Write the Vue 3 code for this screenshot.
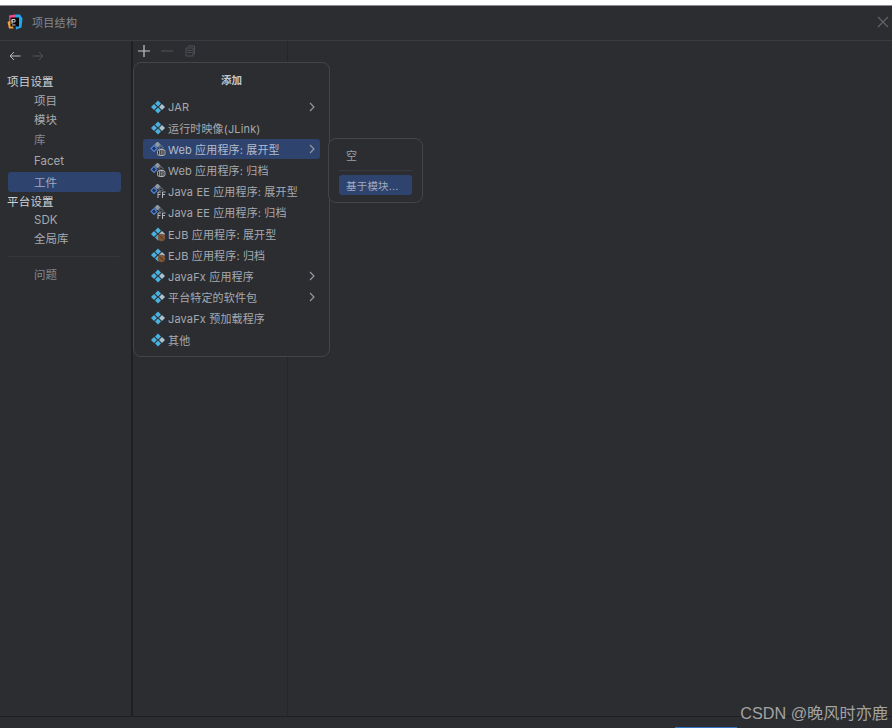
<script setup>
const side = [
  { t: '项目设置', c: 'head h18' },
  { t: '项目', c: 'sub h20' },
  { t: '模块', c: 'sub h18' },
  { t: '库', c: 'sub h22 dim' },
  { t: 'Facet', c: 'sub h22' },
  { t: '工件', c: 'sub h20 sel' },
  { t: '平台设置', c: 'head h18' },
  { t: 'SDK', c: 'sub h19' },
  { t: '全局库', c: 'sub h18' },
]
const items = [
  { t: 'JAR', k: 'mod', a: true },
  { t: '运行时映像(JLink)', k: 'mod' },
  { t: 'Web 应用程序: 展开型', k: 'web', a: true, s: true },
  { t: 'Web 应用程序: 归档', k: 'web' },
  { t: 'Java EE 应用程序: 展开型', k: 'ee' },
  { t: 'Java EE 应用程序: 归档', k: 'ee', w: true },
  { t: 'EJB 应用程序: 展开型', k: 'ejb' },
  { t: 'EJB 应用程序: 归档', k: 'ejb' },
  { t: 'JavaFx 应用程序', k: 'mod', a: true },
  { t: '平台特定的软件包', k: 'mod', a: true },
  { t: 'JavaFx 预加载程序', k: 'mod', w: true },
  { t: '其他', k: 'mod' },
]
</script>

<template>
  <div class="page">
    <div class="topline"></div>
    <header class="title">
      <svg class="logo" width="16" height="16" viewBox="0 0 16 16">
        <path d="M2 1.500l6-1 1 6-6.500 3z" fill="#ef4a8e" />
        <path d="M0.500 8l4-2 2 8.500-4.500 0z" fill="#f2a03a" />
        <path d="M8 .5h5l2.500 4-1 9-5.500 2z" fill="#22a6ee" />
        <rect x="3.500" y="3.500" width="8.500" height="9" fill="#0a0a0a" />
        <path d="M5 5.500h3v2.500h-3zM5 5.500v4.500M5 11h3.500" stroke="#ccc" stroke-width="1" fill="none" />
      </svg>
      <span class="title-text">项目结构</span>
      <svg class="close" width="12" height="12" viewBox="0 0 12 12">
        <path d="M1 1l10 10M11 1L1 11" stroke="#62656b" stroke-width="1.100" />
      </svg>
    </header>
    <main class="body">
      <aside class="side">
        <div class="nav">
          <svg width="12" height="10" viewBox="0 0 12 10">
            <path d="M11.500 5H1M5 1L1 5l4 4" stroke="#b8bbc0" stroke-width="1" fill="none" />
          </svg>
          <svg width="12" height="10" viewBox="0 0 12 10">
            <path d="M.5 5H11M7 1l4 4-4 4" stroke="#505257" stroke-width="1" fill="none" />
          </svg>
        </div>
        <div v-for="s in side" :key="s.t" class="row" :class="s.c">
          <span>{{ s.t }}</span>
        </div>
        <div class="sep"></div>
        <div class="row sub h18 dim"><span>问题</span></div>
      </aside>
      <section class="mid">
        <div class="tools">
          <svg width="12" height="12" viewBox="0 0 12 12">
            <path d="M6 0v12M0 6h12" stroke="#c3c5c9" stroke-width="1.200" />
          </svg>
          <svg width="12" height="12" viewBox="0 0 12 12">
            <path d="M0 6h12" stroke="#4c4e53" stroke-width="1.200" />
          </svg>
          <svg width="12" height="12" viewBox="0 0 12 12">
            <path d="M4 1h6.500v8.500M2 3h7v8H2zM3.500 5.500h4M3.500 7.500h4" stroke="#4f5156" stroke-width="1" fill="none" />
          </svg>
        </div>
      </section>
      <section class="rest"></section>

      <div class="menu">
        <div class="menu-title">添加</div>
        <div class="list">
          <div v-for="i in items" :key="i.t" class="item" :class="{ on: i.s, wide: i.w }">
            <svg class="ico" width="16" height="16" viewBox="0 0 16 16">
              <template v-if="i.k === 'mod' || i.k === 'ejb'">
                <path d="M8 1.500l3 3-3 3-3-3z" fill="#4ab2df" />
                <path d="M4 5l3 3-3 3-3-3z" fill="#4ab2df" />
                <path d="M8 8.500l3 3-3 3-3-3z" fill="#4ab2df" />
                <path d="M12 5l3 3-3 3-3-3z" fill="#a9c3d2" />
                <circle v-if="i.k === 'ejb'" cx="11.500" cy="11.500" r="3.700" fill="#7d5436" />
                <path v-if="i.k === 'ejb'" d="M9.500 10l4 3" stroke="#3a2a20" stroke-width=".8" />
              </template>
              <template v-else>
                <path d="M7.500 1l2.500 2.500L7.500 6 5 3.500z" fill="#8d98a5" stroke="#a9b1ba" stroke-width=".8" />
                <path d="M4 4.500L7 7.500 4 10.500 1 7.500z" fill="#24324f" stroke="#4f86df" stroke-width="1.100" />
                <path d="M11 4.500L13 6.500 11 8.500 9 6.500z" fill="none" stroke="#8d98a5" stroke-width=".8" />
                <template v-if="i.k === 'web'">
                  <rect x="7.500" y="8.500" width="7.500" height="6" rx="2" fill="#2b2d30" stroke="#aeb1b5" stroke-width="1" />
                  <path d="M9.500 9v5M11.200 9v5M13 9v5" stroke="#aeb1b5" stroke-width=".8" />
                </template>
                <template v-else>
                  <rect x="7" y="8" width="9" height="7.500" fill="#2b2d30" />
                  <path d="M8 9v6M8 9h3M8 11.500h2.500M12.500 9v6M12.500 9h3M12.500 11.500h2.500" stroke="#b6b9be" stroke-width="1" fill="none" />
                </template>
              </template>
            </svg>
            <span class="label">{{ i.t }}</span>
            <svg v-if="i.a" class="chev" width="6" height="10" viewBox="0 0 6 10">
              <path d="M1 1l4 4-4 4" stroke="#9a9da3" stroke-width="1.100" fill="none" />
            </svg>
          </div>
        </div>
      </div>

      <div class="submenu">
        <div class="sub-empty">空</div>
        <div class="sub-sep"></div>
        <div class="sub-item">基于模块...</div>
      </div>
    </main>
    <footer class="foot">
      <div class="progress"></div>
      <div class="mark">CSDN @晚风时亦鹿</div>
    </footer>
  </div>
</template>

<style scoped>
.page {
  width: 892px;
  height: 728px;
  display: flex;
  flex-direction: column;
  background: #2b2d30;
  color: #bcbec4;
  font-family: Inter, "Noto Sans CJK SC", sans-serif;
  font-size: 11.500px;
  overflow: hidden;
}
.topline {
  height: 6px;
  background: #fff;
  border-bottom: 1px solid #8a8c90;
  box-sizing: border-box;
  flex: none;
}
.title {
  height: 35px;
  box-sizing: border-box;
  flex: none;
  display: flex;
  align-items: center;
  padding: 0 3px 2px 7px;
  border-bottom: 1px solid #393b40;
}
.logo { flex: none; }
.title-text {
  margin-left: 9px;
  color: #85888e;
  font-size: 11px;
  letter-spacing: .3px;
}
.close { margin-left: auto; }
.body {
  flex: 1;
  display: flex;
  position: relative;
  min-height: 0;
}
.side {
  width: 131px;
  flex: none;
  box-sizing: border-box;
  padding: 0 10px 0 8px;
}
.nav {
  height: 31px;
  display: flex;
  align-items: center;
  gap: 11px;
  padding-left: 1px;
  padding-bottom: 1px;
  box-sizing: border-box;
}
.row {
  display: flex;
  align-items: center;
  margin-left: -1px;
}
.h18 { height: 18px; }
.h19 { height: 19px; }
.h20 { height: 20px; }
.h22 { height: 22px; }
.head {
  color: #cfd1d5;
  font-size: 11.500px;
  letter-spacing: .2px;
}
.sub { padding-left: 27px; color: #a6a9af; }
.dim { color: #85888e; }
.sel {
  background: #2e436e;
  border-radius: 3px;
  color: #a0abc0;
  margin-left: 0;
  padding-left: 26px;
}
.sep {
  height: 1px;
  margin: 9px 2px 8px 0;
  background: #34363a;
}
.mid {
  width: 154px;
  flex: none;
  border-left: 2px solid #1f2023;
  border-right: 1px solid #25262a;
}
.tools {
  display: flex;
  align-items: center;
  gap: 11px;
  height: 20px;
  padding-left: 5px;
}
.rest { flex: 1; }
.menu {
  position: absolute;
  left: 133px;
  top: 21px;
  width: 197px;
  height: 295px;
  box-sizing: border-box;
  background: #2b2d30;
  border: 1px solid #43454a;
  border-radius: 8px;
  padding: 0 9px;
}
.menu-title {
  height: 34px;
  box-sizing: border-box;
  padding-bottom: 2px;
  display: flex;
  align-items: center;
  justify-content: center;
  color: #c4c6cb;
  font-weight: 700;
  font-size: 10.500px;
}
.item {
  display: flex;
  align-items: center;
  height: 20px;
  margin-bottom: 1px;
  padding: 0 5px 0 7px;
  border-radius: 3px;
  color: #a6a9af;
  font-size: 11px;
  letter-spacing: .15px;
}
.item.wide { margin-bottom: 2px; }
.item.on {
  background: #2e436e;
  color: #b4bccd;
}
.ico { flex: none; margin-right: 2px; }
.chev { margin-left: auto; flex: none; }
.submenu {
  position: absolute;
  left: 328px;
  top: 97px;
  width: 95px;
  height: 65px;
  box-sizing: border-box;
  background: #2b2d30;
  border: 1px solid #43454a;
  border-radius: 8px;
  padding: 0 10px;
}
.sub-empty {
  height: 31px;
  padding-left: 7px;
  display: flex;
  align-items: center;
  color: #9a9da3;
  font-size: 11px;
}
.sub-sep {
  height: 1px;
  background: #393b40;
  margin-bottom: 4px;
}
.sub-item {
  height: 20px;
  border-radius: 3px;
  background: #2e436e;
  color: #a0abc0;
  font-size: 10.500px;
  display: flex;
  align-items: center;
  padding-left: 7px;
  letter-spacing: .2px;
}
.foot {
  height: 11px;
  flex: none;
  border-top: 1px solid #1f2023;
  position: relative;
}
.progress {
  position: absolute;
  left: 675px;
  bottom: 0;
  width: 62px;
  height: 1px;
  background: #3574c4;
}
.mark {
  position: absolute;
  right: 4px;
  bottom: 5px;
  color: #a3a3a3;
  font-family: "Liberation Sans", "Noto Sans CJK SC", sans-serif;
  font-size: 16.200px;
  line-height: 20px;
  white-space: nowrap;
}
</style>
